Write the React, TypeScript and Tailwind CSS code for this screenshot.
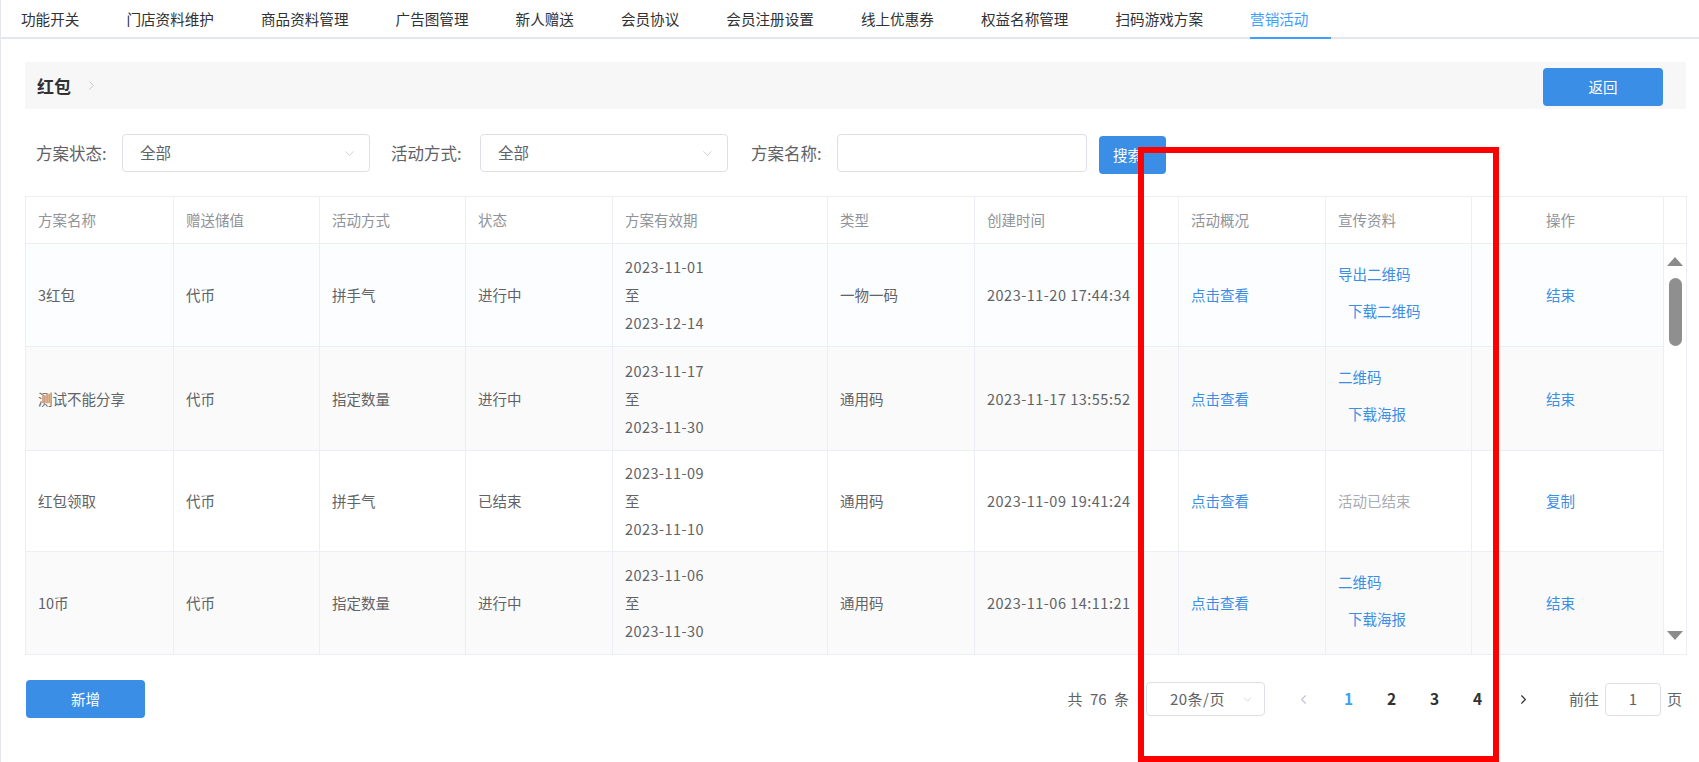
import { ChevronDown, ChevronLeft, ChevronRight } from 'lucide-react';

const tabs = [
  '功能开关',
  '门店资料维护',
  '商品资料管理',
  '广告图管理',
  '新人赠送',
  '会员协议',
  '会员注册设置',
  '线上优惠券',
  '权益名称管理',
  '扫码游戏方案',
  '营销活动',
];

const headers = ['方案名称', '赠送储值', '活动方式', '状态', '方案有效期', '类型', '创建时间', '活动概况', '宣传资料'];

const rows = [
  {
    name: '3红包',
    gift: '代币',
    mode: '拼手气',
    status: '进行中',
    start: '2023-11-01',
    end: '2023-12-14',
    type: '一物一码',
    created: '2023-11-20 17:44:34',
    promo: ['导出二维码', '下载二维码'],
    op: '结束',
    bg: 'bg-[#fcfdff]',
    h: 'h-[103px]',
  },
  {
    name: '测试不能分享',
    gift: '代币',
    mode: '指定数量',
    status: '进行中',
    start: '2023-11-17',
    end: '2023-11-30',
    type: '通用码',
    created: '2023-11-17 13:55:52',
    promo: ['二维码', '下载海报'],
    op: '结束',
    bg: 'bg-[#fafafa]',
    h: 'h-[104px]',
  },
  {
    name: '红包领取',
    gift: '代币',
    mode: '拼手气',
    status: '已结束',
    start: '2023-11-09',
    end: '2023-11-10',
    type: '通用码',
    created: '2023-11-09 19:41:24',
    promo: null,
    op: '复制',
    bg: 'bg-white',
    h: 'h-[101px]',
  },
  {
    name: '10币',
    gift: '代币',
    mode: '指定数量',
    status: '进行中',
    start: '2023-11-06',
    end: '2023-11-30',
    type: '通用码',
    created: '2023-11-06 14:11:21',
    promo: ['二维码', '下载海报'],
    op: '结束',
    bg: 'bg-[#fafafa]',
    h: 'h-[103px]',
  },
];

const cols = 'grid grid-cols-[148px_146px_146px_147px_215px_147px_204px_147px_146px_192px]';
const cell = 'flex items-center pl-[12px] border-r border-b border-[#ebeef5]';

function Select({ width, value }: { width: string; value: string }) {
  return (
    <div className={`${width} h-[38px] flex items-center justify-between pl-[17px] pr-[12px] border border-[#dcdfe6] rounded-[4px] bg-white`}>
      <span className="text-[15.5px] text-[#606266]">{value}</span>
      <ChevronDown className="w-[15px] h-[15px] text-[#c0c4cc]" strokeWidth={1.25} />
    </div>
  );
}

export default function App() {
  return (
    <div className="relative w-[1699px] h-[762px] overflow-hidden bg-white border-l border-[#e4e7ed] [font-family:'Noto_Sans_CJK_SC','Liberation_Sans',sans-serif]">
      {/* 顶部标签 */}
      <div className="h-[39px] border-b-2 border-[#e4e7ed] flex items-stretch pl-[20px] gap-[47px]">
        {tabs.map((t) => {
          const active = t === '营销活动';
          return (
            <div
              key={t}
              className={`relative flex items-center text-[14.6px] ${active ? 'text-[#409eff]' : 'text-[#303133]'}`}
            >
              {t}
              {active && <div className="absolute left-0 -bottom-[2px] w-[81px] h-[2px] bg-[#409eff]" />}
            </div>
          );
        })}
      </div>

      <div className="pl-[24px] pr-[13px]">
        {/* 标题栏 */}
        <div className="mt-[23px] h-[47px] bg-[#f7f7f7] flex items-center justify-between pl-[12px] pr-[23px]">
          <div className="flex items-center gap-[13px]">
            <span className="text-[17px] font-bold text-[#303133]">红包</span>
            <ChevronRight className="w-[15px] h-[15px] text-[#c0c4cc]" strokeWidth={1.5} />
          </div>
          <button className="mt-[3px] w-[120px] h-[38px] rounded-[4px] bg-[#3a8ee6] text-white text-[14.5px]">返回</button>
        </div>

        {/* 筛选 */}
        <div className="mt-[25px] h-[38px] flex items-center">
          <div className="w-[97px] pl-[11px] text-[16.5px] text-[#606266]">方案状态:</div>
          <Select width="w-[248px]" value="全部" />
          <div className="w-[110px] pl-[21px] text-[16.5px] text-[#606266]">活动方式:</div>
          <Select width="w-[248px]" value="全部" />
          <div className="w-[109px] pl-[23px] text-[16.5px] text-[#606266]">方案名称:</div>
          <div className="w-[250px] h-[38px] border border-[#dcdfe6] rounded-[4px] bg-white" />
          <button className="ml-[12px] mt-[3px] w-[67px] h-[38px] rounded-[4px] bg-[#3a8ee6] text-white text-[14.5px] text-left pl-[14px]">
            搜索
          </button>
        </div>

        {/* 表格 */}
        <div className="mt-[24px] w-[1662px] border-l border-t border-r border-[#ebeef5] text-[14.5px]">
          <div className="flex h-[47px]">
            <div className={cols}>
              {headers.map((h) => (
                <div key={h} className={`${cell} text-[#909399]`}>
                  {h}
                </div>
              ))}
              <div className={`${cell} justify-center pl-0 pr-[26px] text-[#909399]`}>操作</div>
            </div>
            <div className="flex-1 border-b border-[#ebeef5]" />
          </div>

          <div className="flex">
            <div className={cols}>
              {rows.map((r) => (
                <div key={r.name} className="contents">
                  <div className={`${cell} ${r.bg} ${r.h} text-[#606266]`}>{r.name}</div>
                  <div className={`${cell} ${r.bg} text-[#606266]`}>{r.gift}</div>
                  <div className={`${cell} ${r.bg} text-[#606266]`}>{r.mode}</div>
                  <div className={`${cell} ${r.bg} text-[#606266]`}>{r.status}</div>
                  <div className={`${cell} ${r.bg} text-[#606266]`}>
                    <div className="flex flex-col leading-[28px] tracking-[0.45px]">
                      <span>{r.start}</span>
                      <span>至</span>
                      <span>{r.end}</span>
                    </div>
                  </div>
                  <div className={`${cell} ${r.bg} text-[#606266]`}>{r.type}</div>
                  <div className={`${cell} ${r.bg} text-[#606266] tracking-[0.5px]`}>{r.created}</div>
                  <div className={`${cell} ${r.bg} text-[#3a8ee6]`}>点击查看</div>
                  <div className={`${cell} ${r.bg}`}>
                    {r.promo ? (
                      <div className="flex flex-col gap-[15px] pb-[6px] text-[#3a8ee6] leading-[22px]">
                        <span>{r.promo[0]}</span>
                        <span className="pl-[10px]">{r.promo[1]}</span>
                      </div>
                    ) : (
                      <span className="text-[#a8abb2]">活动已结束</span>
                    )}
                  </div>
                  <div className={`${cell} ${r.bg} justify-center pl-0 pr-[26px] text-[#3a8ee6]`}>{r.op}</div>
                </div>
              ))}
            </div>

            {/* 滚动条 */}
            <div className="flex-1 flex flex-col items-center border-b border-[#ebeef5] pt-[13px] pb-[14px]">
              <div className="w-0 h-0 border-l-[8px] border-r-[8px] border-b-[9px] border-l-transparent border-r-transparent border-b-[#8c8c8c]" />
              <div className="mt-[12px] w-[13px] h-[68px] rounded-full bg-[#8f8f8f]" />
              <div className="flex-1" />
              <div className="w-0 h-0 border-l-[8px] border-r-[8px] border-t-[9px] border-l-transparent border-r-transparent border-t-[#8c8c8c]" />
            </div>
          </div>
        </div>

        {/* 底部 */}
        <div className="mt-[25px] flex items-center justify-between">
          <button className="ml-[1px] w-[119px] h-[38px] rounded-[4px] bg-[#3a8ee6] text-white text-[14.5px]">新增</button>

          <div className="flex items-center pr-[4px] text-[15px] text-[#606266]">
            <span className="[word-spacing:4px]">共 76 条</span>
            <div className="ml-[17px] w-[119px] h-[34px] flex items-center justify-between pl-[23px] pr-[10px] border border-[#dcdfe6] rounded-[4px]">
              <span className="tracking-[0.5px]">20条/页</span>
              <ChevronDown className="w-[13px] h-[13px] text-[#c0c4cc]" strokeWidth={1.25} />
            </div>
            <div className="ml-[21px] w-[41px] pr-[6px] flex justify-center">
              <ChevronLeft className="w-[15px] h-[15px] text-[#c0c4cc]" strokeWidth={1.75} />
            </div>
            {['1', '2', '3', '4'].map((p) => (
              <div
                key={p}
                className={`w-[43px] text-center font-bold text-[15.5px] ${p === '1' ? 'text-[#409eff]' : 'text-[#303133]'}`}
              >
                {p}
              </div>
            ))}
            <div className="w-[47px] pl-[3px] flex justify-center">
              <ChevronRight className="w-[15px] h-[15px] text-[#303133]" strokeWidth={1.75} />
            </div>
            <span className="ml-[23px]">前往</span>
            <div className="ml-[6px] w-[56px] h-[33px] flex items-center justify-center border border-[#dcdfe6] rounded-[4px]">
              1
            </div>
            <span className="ml-[6px]">页</span>
          </div>
        </div>
      </div>

      {/* 标注红框 */}
      <div className="absolute left-[1137px] top-[147px] w-[361px] h-[615px] border-[6px] border-[#ff0000] pointer-events-none" />
    </div>
  );
}
